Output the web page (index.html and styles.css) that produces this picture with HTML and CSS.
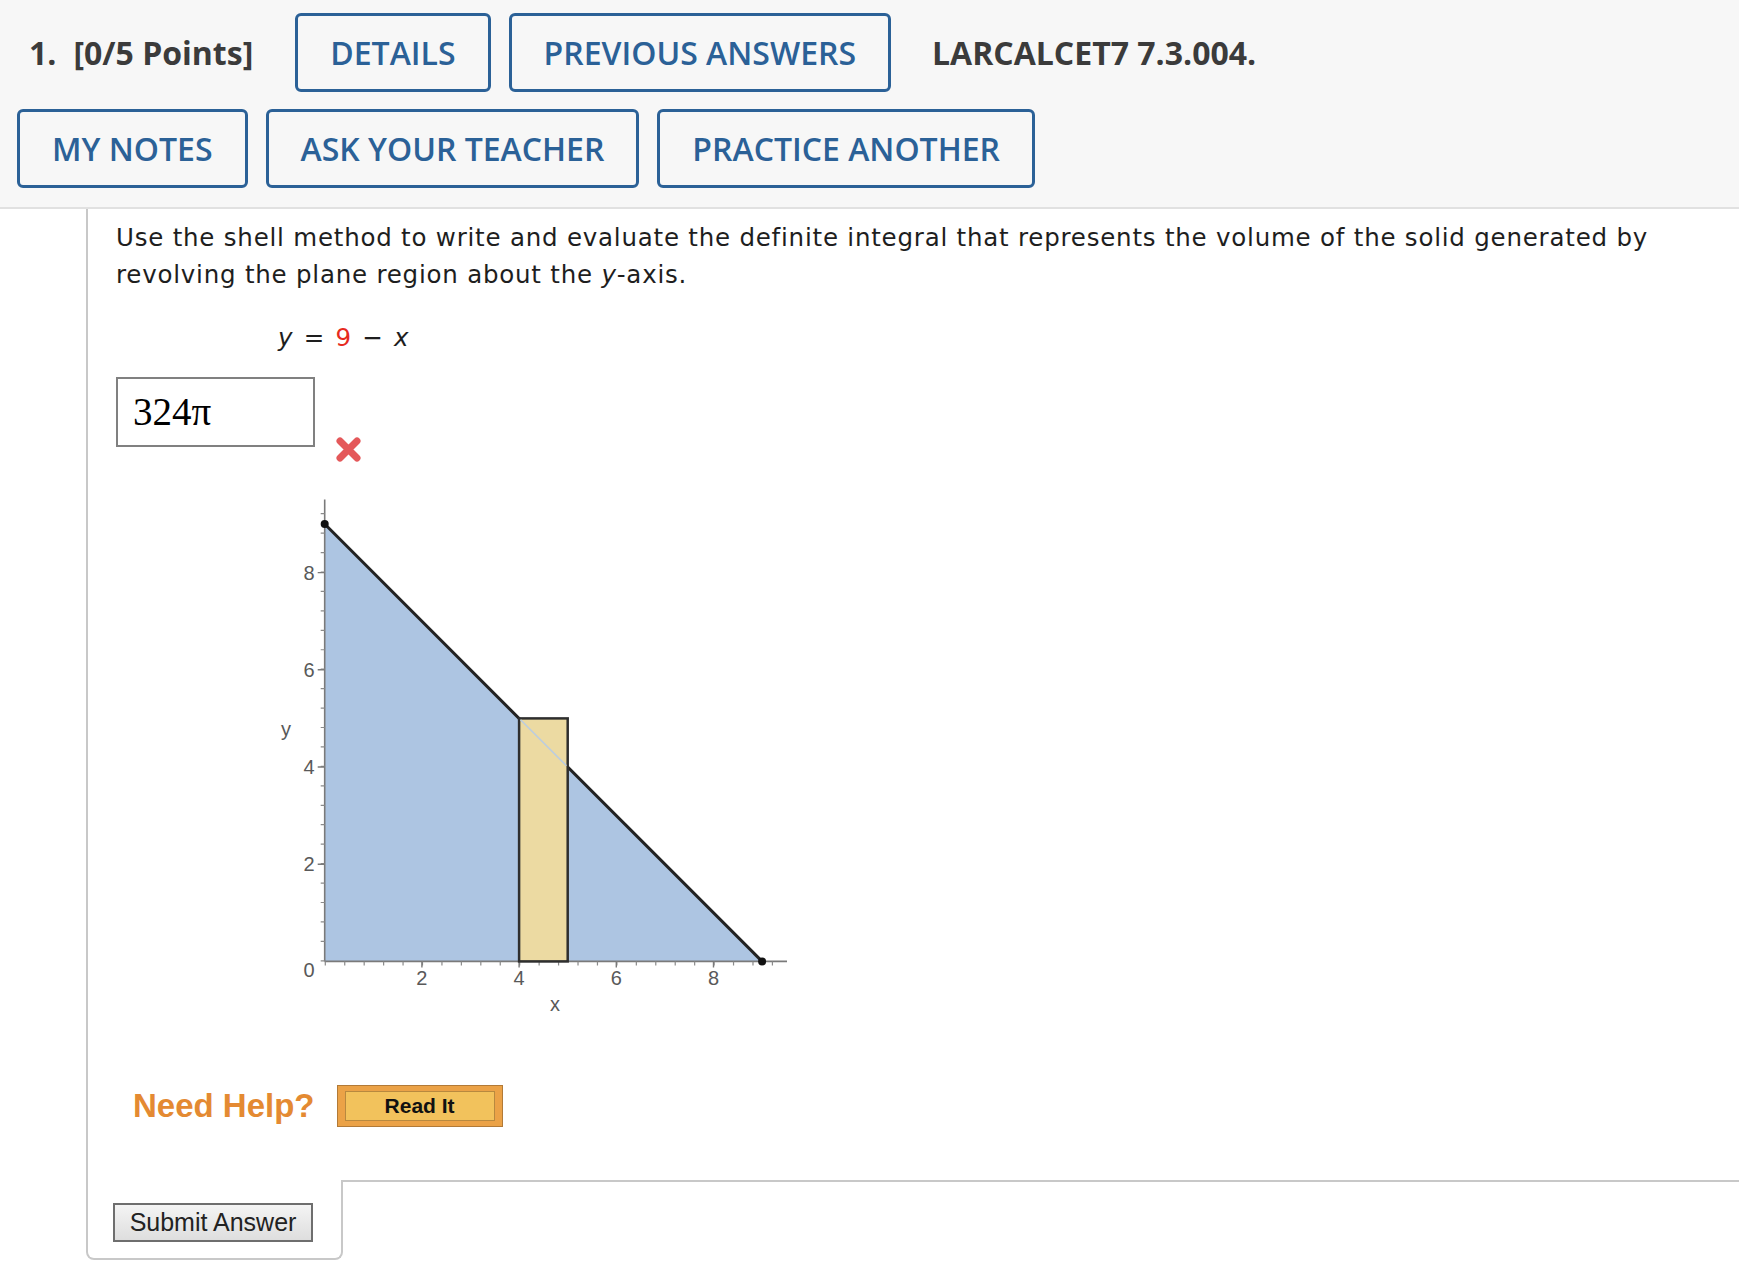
FILE: index.html
```html
<!DOCTYPE html>
<html lang="en">
<head>
<meta charset="utf-8">
<title>LARCALCET7 7.3.004</title>
<link rel="stylesheet" href="styles.css">
</head>
<body>
<header class="qhead">
  <div class="qrow qrow1">
    <h1 class="qtitle"><span class="qnum">1.</span>[0/5 Points]</h1>
    <button class="qbtn">DETAILS</button>
    <button class="qbtn">PREVIOUS ANSWERS</button>
    <span class="qcode">LARCALCET7 7.3.004.</span>
  </div>
  <div class="qrow qrow2">
    <button class="qbtn">MY NOTES</button>
    <button class="qbtn">ASK YOUR TEACHER</button>
    <button class="qbtn">PRACTICE ANOTHER</button>
  </div>
</header>

<main class="qbody">
  <p class="prompt">Use the shell method to write and evaluate the definite integral that represents the volume of the solid generated by revolving the plane region about the <i>y</i>-axis.</p>
  <p class="equation"><i>y</i> = <span class="red">9</span> − <i>x</i></p>

  <div class="answer-row">
    <div class="answer-box">324π</div>
    <svg class="wrong" width="27" height="27" viewBox="0 0 27 27" aria-label="incorrect">
      <path d="M5 5 L22 22 M22 5 L5 22" stroke="#e4585a" stroke-width="7" stroke-linecap="round" fill="none"/>
    </svg>
  </div>

  <svg class="graph" width="540" height="540" viewBox="0 0 540 540">
    <polygon points="64.7,44 502.1,481.4 64.7,481.4" fill="#adc5e2"/>
    <line x1="64.7" y1="19.6" x2="64.7" y2="481.4" stroke="#7a7a7a" stroke-width="1.6"/>
    <line x1="64.7" y1="481.4" x2="527" y2="481.4" stroke="#7a7a7a" stroke-width="1.6"/>
    <line x1="62.7" y1="481.4" x2="62.7" y2="20" stroke="#8a8a8a" stroke-width="4" stroke-dasharray="1.2 18.24"/>
    <line x1="64.7" y1="483.4" x2="527" y2="483.4" stroke="#8a8a8a" stroke-width="4" stroke-dasharray="1.2 18.24"/>
    <path d="M57.7 384.2h7M57.7 287h7M57.7 189.8h7M57.7 92.6h7" stroke="#7a7a7a" stroke-width="1.4"/>
    <path d="M161.9 481.4v6M259.1 481.4v6M356.3 481.4v6M453.5 481.4v6" stroke="#7a7a7a" stroke-width="1.4"/>
    <line x1="64.7" y1="44" x2="502.1" y2="481.4" stroke="#222" stroke-width="3"/>
    <rect x="259.1" y="238.4" width="48.6" height="243" fill="#ecdaa2" stroke="#2e2e2e" stroke-width="2.5"/>
    <line x1="260.5" y1="239.8" x2="306.4" y2="285.7" stroke="#bccde0" stroke-width="1.6"/>
    <circle cx="64.7" cy="44" r="4" fill="#111"/>
    <circle cx="502.1" cy="481.4" r="4" fill="#111"/>
    <g class="tick-label">
      <text x="49" y="100">8</text>
      <text x="49" y="197">6</text>
      <text x="49" y="294">4</text>
      <text x="49" y="391">2</text>
      <text x="49" y="497">0</text>
      <text x="161.9" y="505">2</text>
      <text x="259.1" y="505">4</text>
      <text x="356.3" y="505">6</text>
      <text x="453.5" y="505">8</text>
      <text x="295" y="531">x</text>
      <text x="26" y="256">y</text>
    </g>
  </svg>

  <div class="help-row">
    <span class="need-help">Need Help?</span>
    <button class="read-it"><span>Read It</span></button>
  </div>
</main>

<div class="qfoot">
  <div class="submit-tab">
    <button class="submit">Submit Answer</button>
  </div>
  <div class="foot-rest"></div>
</div>
</body>
</html>
```

FILE: styles.css
```css
* { box-sizing: border-box; }

html, body {
  margin: 0;
  padding: 0;
  background: #ffffff;
}

body {
  font-family: "DejaVu Sans", Verdana, sans-serif;
  color: #1e1e1e;
}

.qhead {
  background: #f7f7f7;
  border-bottom: 2px solid #e1e1e1;
  padding: 13px 0 19px 0;
}

.qrow {
  display: flex;
  align-items: center;
  gap: 18px;
}

.qrow1 { padding-left: 29px; }
.qrow2 { padding-left: 17px; margin-top: 17px; }

.qtitle {
  margin: 0 24px 0 0;
  font-family: "Open Sans", sans-serif;
  font-weight: 700;
  font-size: 32px;
  color: #3b3b3b;
  white-space: nowrap;
}

.qnum { margin-right: 17px; }

.qcode {
  margin-left: 23px;
  font-family: "Open Sans", sans-serif;
  font-weight: 700;
  font-size: 32px;
  color: #3b3b3b;
}

.qbtn {
  height: 79px;
  padding: 0 32px;
  background: transparent;
  border: 3px solid #2b6197;
  border-radius: 6px;
  font-family: "Open Sans", sans-serif;
  font-weight: 600;
  font-size: 32px;
  color: #2b6197;
  white-space: nowrap;
}

.qbody {
  margin-left: 86px;
  border-left: 2px solid #c8c8c8;
  padding: 11px 0 53px 28px;
}

.prompt {
  margin: 0;
  padding-right: 60px;
  font-size: 24.5px;
  letter-spacing: 0.78px;
  line-height: 36.6px;
}

.equation {
  margin: 27px 0 0 162px;
  font-size: 24.5px;
  letter-spacing: 0.7px;
  word-spacing: 2px;
  line-height: 36.6px;
}

.red { color: #e62b1e; }

.answer-row {
  display: flex;
  align-items: flex-start;
  gap: 20px;
  margin-top: 20px;
}

.answer-box {
  width: 199px;
  height: 70px;
  border: 2px solid #808080;
  padding-left: 15px;
  font-family: "Liberation Serif", "Times New Roman", serif;
  font-size: 39px;
  line-height: 66px;
  color: #000;
}

.wrong { margin-top: 59px; display: block; }

.graph {
  display: block;
  margin: 17px 0 0 144px;
}

.tick-label text {
  font-family: "Liberation Sans", Arial, sans-serif;
  font-size: 20px;
  fill: #595959;
  text-anchor: middle;
}

.help-row {
  display: flex;
  align-items: center;
  gap: 22px;
  margin: 65px 0 0 17px;
}

.need-help {
  font-family: "Liberation Sans", Arial, sans-serif;
  font-weight: 700;
  font-size: 33px;
  color: #e48a32;
}

.read-it {
  width: 166px;
  height: 42px;
  padding: 5px 7px;
  background: #eba247;
  border: 1px solid #b27a37;
  display: flex;
}

.read-it span {
  flex: 1;
  display: flex;
  align-items: center;
  justify-content: center;
  background: #f2c25c;
  border: 1px solid #b8893f;
  font-family: "Liberation Sans", Arial, sans-serif;
  font-weight: 700;
  font-size: 21px;
  color: #111;
}

.qfoot {
  display: flex;
  margin-left: 86px;
  margin-bottom: 16px;
}

.submit-tab {
  border: 2px solid #c8c8c8;
  border-top: none;
  border-radius: 0 0 8px 8px;
  padding: 23px 28px 16px 25px;
}

.foot-rest {
  flex: 1;
  border-top: 2px solid #c8c8c8;
}

.submit {
  display: block;
  width: 200px;
  height: 39px;
  padding: 0;
  border: 2px solid #6e6e6e;
  background: linear-gradient(#f4f4f4, #dedede);
  font-family: "Liberation Sans", Arial, sans-serif;
  font-size: 25px;
  color: #222;
}
```
